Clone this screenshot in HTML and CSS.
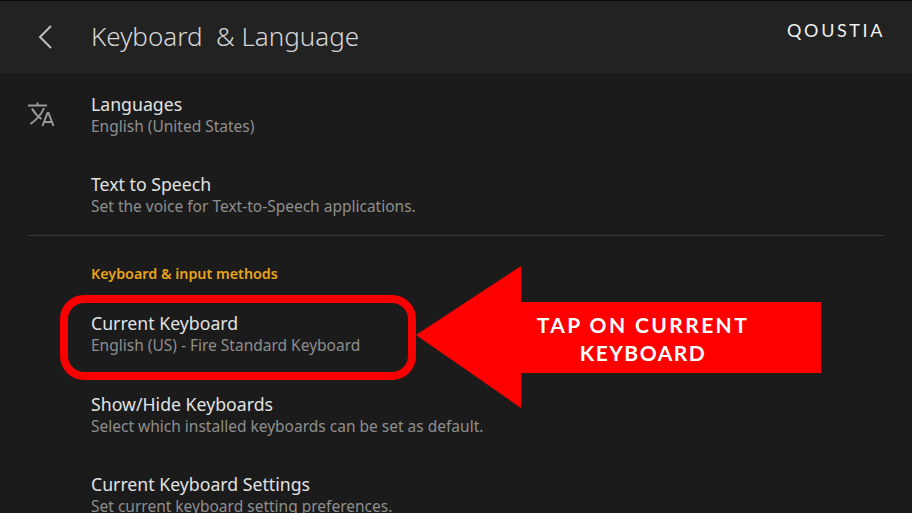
FILE: index.html
```html
<!DOCTYPE html>
<html lang="en">
<head>
<meta charset="utf-8">
<title>Keyboard &amp; Language</title>
<link rel="stylesheet" href="styles.css">
</head>
<body>
<div class="screen">
  <header class="topbar">
    <svg class="back" width="16" height="26" viewBox="0 0 16 26" aria-hidden="true"><path d="M14 2 L3 13 L14 24"/></svg>
    <h1 class="title">Keyboard&nbsp; &amp; Language</h1>
    <div class="brand">QOUSTIA</div>
  </header>
  <main class="content">
    <section class="group">
      <svg class="lang-icon" width="28" height="28" viewBox="0 0 28 28" aria-hidden="true">
        <path class="thin" d="M1 5.5H20M10.5 2.5V5.5M5 8.5C7.5 13 10 16 14.5 19M17 8C15 13 10.5 19 3.5 24"/>
        <path class="thin" d="M15.5 26L20.5 13H21.5L26.5 26M17 22H25"/>
      </svg>
      <div class="row">
        <div class="row-title">Languages</div>
        <div class="row-sub">English (United States)</div>
      </div>
      <div class="row">
        <div class="row-title">Text to Speech</div>
        <div class="row-sub">Set the voice for Text-to-Speech applications.</div>
      </div>
    </section>
    <hr class="divider">
    <section class="group group-second">
      <h2 class="section-label">Keyboard &amp; input methods</h2>
      <div class="row">
        <div class="row-title">Current Keyboard</div>
        <div class="row-sub">English (US) - Fire Standard Keyboard</div>
      </div>
      <div class="row">
        <div class="row-title">Show/Hide Keyboards</div>
        <div class="row-sub">Select which installed keyboards can be set as default.</div>
      </div>
      <div class="row">
        <div class="row-title">Current Keyboard Settings</div>
        <div class="row-sub">Set current keyboard setting preferences.</div>
      </div>
    </section>
  </main>
  <div class="highlight"></div>
  <svg class="arrow" width="420" height="160" viewBox="0 0 420 160" aria-hidden="true"><path d="M2 72 L107 3 V39 H407 V110 H107 V145 Z"/></svg>
  <div class="callout">TAP ON CURRENT<br><span class="callout-second">KEYBOARD</span></div>
</div>
</body>
</html>
```
FILE: styles.css
```css
* { box-sizing: border-box; }
html, body { margin: 0; padding: 0; background: #1b1b1b; }
.screen {
  position: relative;
  width: 912px;
  height: 513px;
  overflow: hidden;
  background: #1b1b1b;
  font-family: "Noto Sans", "Open Sans", sans-serif;
}
.topbar {
  display: flex;
  align-items: center;
  height: 73px;
  border-top: 1px solid #0a0a0a;
  background: #222222;
  padding: 0 28px 0 37px;
}
.back { fill: none; stroke: #bdbdbd; stroke-width: 2; margin-right: 38px; flex: none; }
.title {
  margin: -2px 0 0;
  font-size: 26px;
  font-weight: 300;
  color: #d6d6d6;
  line-height: 1;
}
.brand {
  margin-left: auto;
  margin-top: -15px;
  margin-right: -1px;
  font-family: "Lato", sans-serif;
  font-size: 18px;
  letter-spacing: 2.6px;
  color: #f0f0f0;
}
.content { padding: 21px 28px 0; }
.group { position: relative; padding-left: 63px; display: flex; flex-direction: column; gap: 36px; }
.group-second { gap: 36.5px; margin-top: 28px; }
.lang-icon { position: absolute; left: -1px; top: 6px; }
.thin { fill: none; stroke: #9a9a9a; stroke-width: 2; }
.row-title { font-size: 17.7px; line-height: 21px; color: #e2e2e2; }
.row-sub { font-size: 15.5px; line-height: 23px; color: #8e8e8e; }
.divider { margin: 17px 0 0; border: 0; height: 1px; background: #383838; }
.section-label {
  margin: 0 0 -7.5px;
  font-size: 14.3px;
  line-height: 20px;
  font-weight: 600;
  color: #e8a317;
}
.highlight {
  position: absolute;
  left: 60px;
  top: 295px;
  width: 356px;
  height: 85px;
  border: 8px solid #f90000;
  border-radius: 24px;
}
.arrow { position: absolute; left: 414px; top: 263px; }
.arrow path { fill: #fe0000; }
.callout {
  position: absolute;
  left: 521px;
  top: 311px;
  width: 244px;
  text-align: center;
  font-family: "Lato", sans-serif;
  font-size: 21px;
  font-weight: 700;
  line-height: 28px;
  letter-spacing: 2.4px;
  color: #ffffff;
}
.callout-second { letter-spacing: 1.5px; }
```
